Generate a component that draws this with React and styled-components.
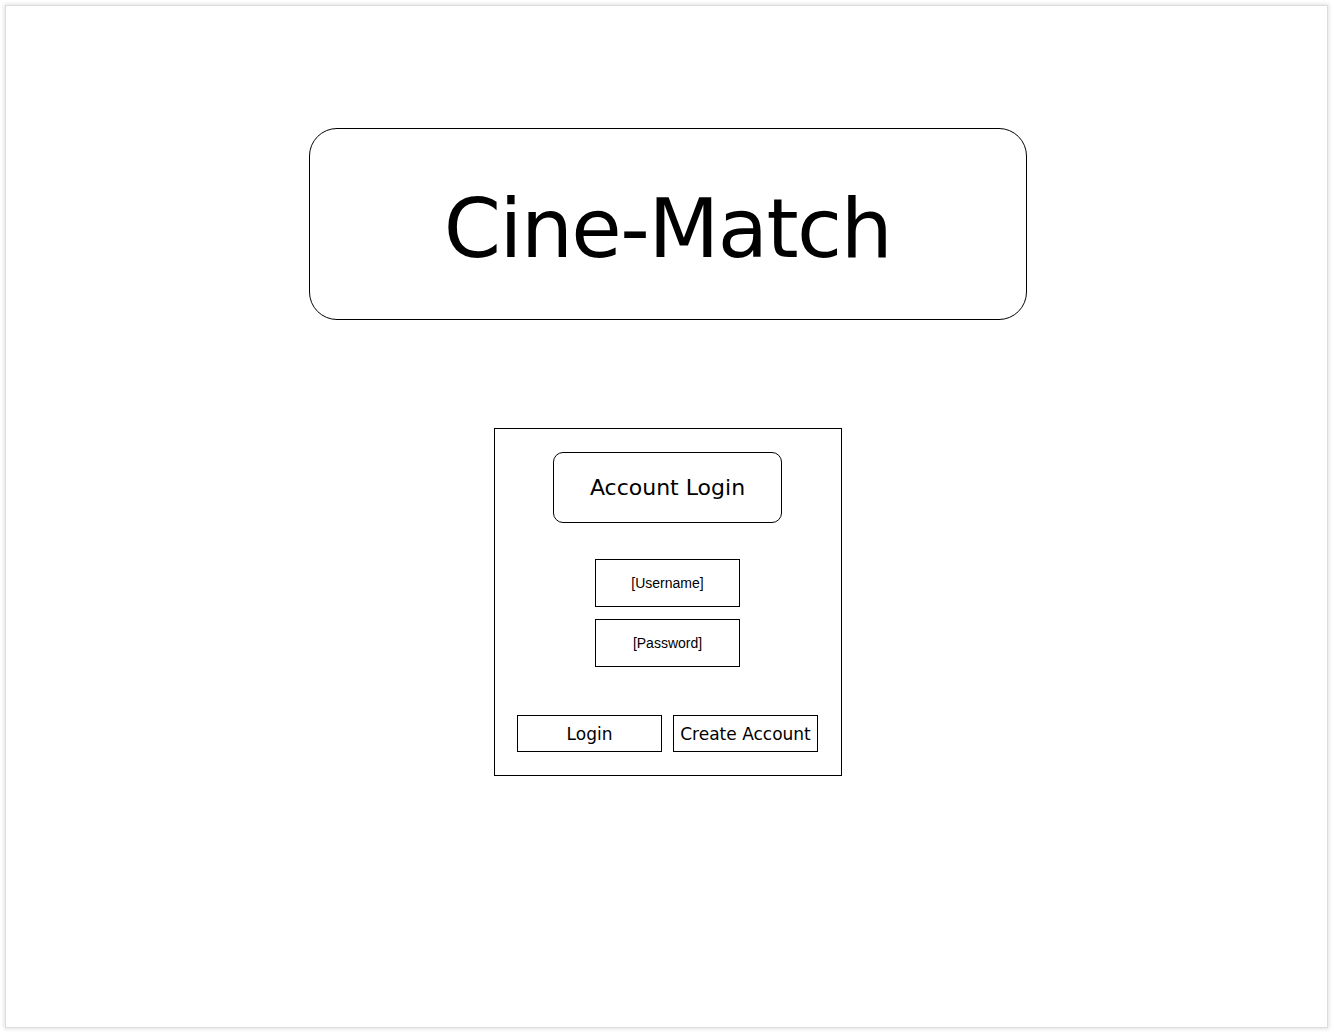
import { useState } from 'react';
import { styled, createGlobalStyle } from 'styled-components'

const GlobalStyle = createGlobalStyle`
  * {
    box-sizing: border-box;
  }

  body {
    margin: 0;
    background-color: #ffffff;
    font-family: "Comic Sans MS", "DejaVu Sans", sans-serif;
  }
`

const Sheet = styled.div`
  width: 1323px;
  height: 1023px;
  margin: 5px;
  background-color: #ffffff;
  border: 1px solid #dcdcdc;
  box-shadow: 0 0 4px 1px rgba(0, 0, 0, 0.12);
  display: flex;
  flex-direction: column;
  align-items: center;
  padding-top: 122px;
  padding-left: 2px;
`

const TitleBox = styled.header`
  width: 718px;
  height: 192px;
  border: 1px solid #000;
  border-radius: 28px;
  display: flex;
  align-items: center;
  justify-content: center;
  padding-top: 8px;
`

const Title = styled.h1`
  margin: 0;
  font-size: 82px;
  font-weight: 400;
  letter-spacing: -1.5px;
  color: #000;
`

const LoginPanel = styled.section`
  width: 348px;
  height: 348px;
  margin-top: 108px;
  border: 1px solid #000;
  padding: 23px;
  display: flex;
  flex-direction: column;
  align-items: center;
`

const HeadingBox = styled.div`
  width: 229px;
  height: 72px;
  border: 1px solid #000;
  border-radius: 10px;
  display: flex;
  align-items: center;
  justify-content: center;
  font-size: 22px;
  color: #000;
  margin-bottom: 36px;
`

const Fields = styled.div`
  display: flex;
  flex-direction: column;
  gap: 12px;
  margin-bottom: 48px;
`

const Field = styled.div`
  width: 145px;
  height: 48px;
  border: 1px solid #000;
  display: flex;
  align-items: center;
  justify-content: center;
  font-family: "Liberation Sans", Arial, sans-serif;
  font-size: 14px;
  color: #000;
`

const Actions = styled.div`
  display: flex;
  gap: 11px;
`

const Button = styled.button`
  width: 145px;
  height: 37px;
  border: 1px solid #000;
  border-radius: 0;
  background-color: #fff;
  font-family: inherit;
  font-size: 17px;
  color: #000;
  padding: 0;
  padding-top: 1px;
  cursor: pointer;
`

export default function App() {
  const [clicked, setClicked] = useState('');

  return (
    <>
      <GlobalStyle />
      <Sheet>
        <TitleBox>
          <Title>Cine-Match</Title>
        </TitleBox>
        <LoginPanel>
          <HeadingBox>Account Login</HeadingBox>
          <Fields>
            <Field>[Username]</Field>
            <Field>[Password]</Field>
          </Fields>
          <Actions>
            <Button onClick={() => setClicked('login')}>Login</Button>
            <Button onClick={() => setClicked('create')}>Create Account</Button>
          </Actions>
        </LoginPanel>
      </Sheet>
    </>
  );
}
